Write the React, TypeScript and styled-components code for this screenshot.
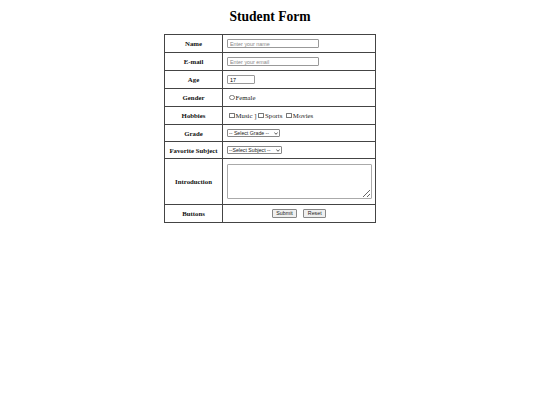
import React from "react";
import styled, { createGlobalStyle } from "styled-components";

const Global = createGlobalStyle`
  html, body { margin: 0; padding: 0; background: #fff; }
  body { font-family: "Liberation Serif", "Times New Roman", serif; color: #000; }
`;

const Page = styled.div`
  display: flex;
  flex-direction: column;
  align-items: center;
  padding-top: 8px;
`;

const Title = styled.h1`
  margin: 0 0 9px 0;
  font-size: 13.6px;
  line-height: 17px;
  font-weight: bold;
  font-family: "Liberation Serif", "Times New Roman", serif;
`;

const Table = styled.table`
  border-collapse: collapse;
  width: 212px;
  border: 1px solid #444;
  table-layout: fixed;
`;

const Row = styled.tr<{ $h: number }>`
  height: ${(p) => p.$h}px;
`;

const Label = styled.th`
  width: 57px;
  border: 1px solid #444;
  padding: 0;
  font-size: 6.8px;
  font-weight: bold;
  text-align: center;
  vertical-align: middle;
  white-space: nowrap;
  color: #111;
`;

const Cell = styled.td`
  border: 1px solid #444;
  padding: 0 4px;
  vertical-align: middle;
  font-size: 6.8px;
`;

const CenterCell = styled(Cell)`
  text-align: center;
`;

const TextInput = styled.input<{ $w: number }>`
  box-sizing: border-box;
  width: ${(p) => p.$w}px;
  height: 9px;
  padding: 0 2px;
  margin: 0;
  border: 1px solid #999;
  border-radius: 1px;
  font-family: "Liberation Sans", Arial, sans-serif;
  font-size: 5.4px;
  display: block;
  color: #000;
  outline: none;
  &::placeholder { color: #888; }
`;

const Choice = styled.label`
  display: inline-flex;
  align-items: center;
  font-size: 6.8px;
  color: #222;
`;

const Gap = styled.span`
  display: inline-block;
  width: 2px;
`;

const Mark = styled.input<{ $round?: boolean }>`
  appearance: none;
  -webkit-appearance: none;
  box-sizing: border-box;
  width: 5.5px;
  height: 5.5px;
  margin: 0 1px 0 2px;
  border: 0.6px solid #777;
  border-radius: ${(p) => (p.$round ? "50%" : "0.5px")};
  background: #fff;
`;

const SelectWrap = styled.span<{ $w: number }>`
  position: relative;
  display: block;
  width: ${(p) => p.$w}px;
  height: 8px;
`;

const Select = styled.select`
  appearance: none;
  -webkit-appearance: none;
  box-sizing: border-box;
  width: 100%;
  height: 8px;
  padding: 0 0 0 1px;
  margin: 0;
  font-family: "Liberation Sans", Arial, sans-serif;
  font-size: 5.2px;
  line-height: 6px;
  border: 0.7px solid #888;
  border-radius: 1px;
  display: block;
  background: #fff;
  color: #222;
`;

const Arrow = styled.svg`
  position: absolute;
  right: 2px;
  top: 2.5px;
  width: 4px;
  height: 3px;
  pointer-events: none;
`;

const TextArea = styled.textarea`
  box-sizing: border-box;
  width: 145px;
  height: 35px;
  margin: 0;
  display: block;
  border: 1px solid #aaa;
  border-radius: 1px;
  resize: both;
  font-size: 5px;
`;

const Button = styled.button`
  box-sizing: border-box;
  height: 9px;
  padding: 0 3.5px;
  margin: 0 3px;
  font-family: "Liberation Sans", Arial, sans-serif;
  font-size: 5.3px;
  line-height: 7px;
  border: 0.7px solid #888;
  border-radius: 1px;
  background: #efefef;
  color: #222;
`;

function DropDown({ w, children }: { w: number; children: React.ReactNode }) {
  return (
    <SelectWrap $w={w}>
      <Select defaultValue="">{children}</Select>
      <Arrow viewBox="0 0 4 3">
        <path d="M0.4 0.5 L2 2.3 L3.6 0.5" fill="none" stroke="#333" strokeWidth="0.8" />
      </Arrow>
    </SelectWrap>
  );
}

export default function App() {
  return (
    <>
      <Global />
      <Page>
        <Title>Student Form</Title>
        <Table>
          <tbody>
            <Row $h={18}>
              <Label>Name</Label>
              <Cell>
                <TextInput $w={92} type="text" placeholder="Enter your name" />
              </Cell>
            </Row>
            <Row $h={18}>
              <Label>E-mail</Label>
              <Cell>
                <TextInput $w={92} type="email" placeholder="Enter your email" />
              </Cell>
            </Row>
            <Row $h={18}>
              <Label>Age</Label>
              <Cell>
                <TextInput $w={28} type="text" defaultValue="17" />
              </Cell>
            </Row>
            <Row $h={18}>
              <Label>Gender</Label>
              <Cell>
                <Choice>
                  <Mark $round type="radio" name="gender" />
                  Female
                </Choice>
              </Cell>
            </Row>
            <Row $h={18}>
              <Label>Hobbies</Label>
              <Cell>
                <Choice>
                  <Mark type="checkbox" />
                  Music ]
                </Choice>
                <Choice>
                  <Mark type="checkbox" />
                  Sports
                </Choice>
                <Gap />
                <Choice>
                  <Mark type="checkbox" />
                  Movies
                </Choice>
              </Cell>
            </Row>
            <Row $h={17}>
              <Label>Grade</Label>
              <Cell>
                <DropDown w={53}>
                  <option value="">-- Select Grade --</option>
                  <option>9</option>
                  <option>10</option>
                  <option>11</option>
                  <option>12</option>
                </DropDown>
              </Cell>
            </Row>
            <Row $h={17}>
              <Label>Favorite Subject</Label>
              <Cell>
                <DropDown w={55}>
                  <option value="">--Select Subject --</option>
                  <option>Math</option>
                  <option>Science</option>
                  <option>English</option>
                </DropDown>
              </Cell>
            </Row>
            <Row $h={46}>
              <Label>Introduction</Label>
              <Cell>
                <TextArea />
              </Cell>
            </Row>
            <Row $h={18}>
              <Label>Buttons</Label>
              <CenterCell>
                <Button type="submit">Submit</Button>
                <Button type="reset">Reset</Button>
              </CenterCell>
            </Row>
          </tbody>
        </Table>
      </Page>
    </>
  );
}
